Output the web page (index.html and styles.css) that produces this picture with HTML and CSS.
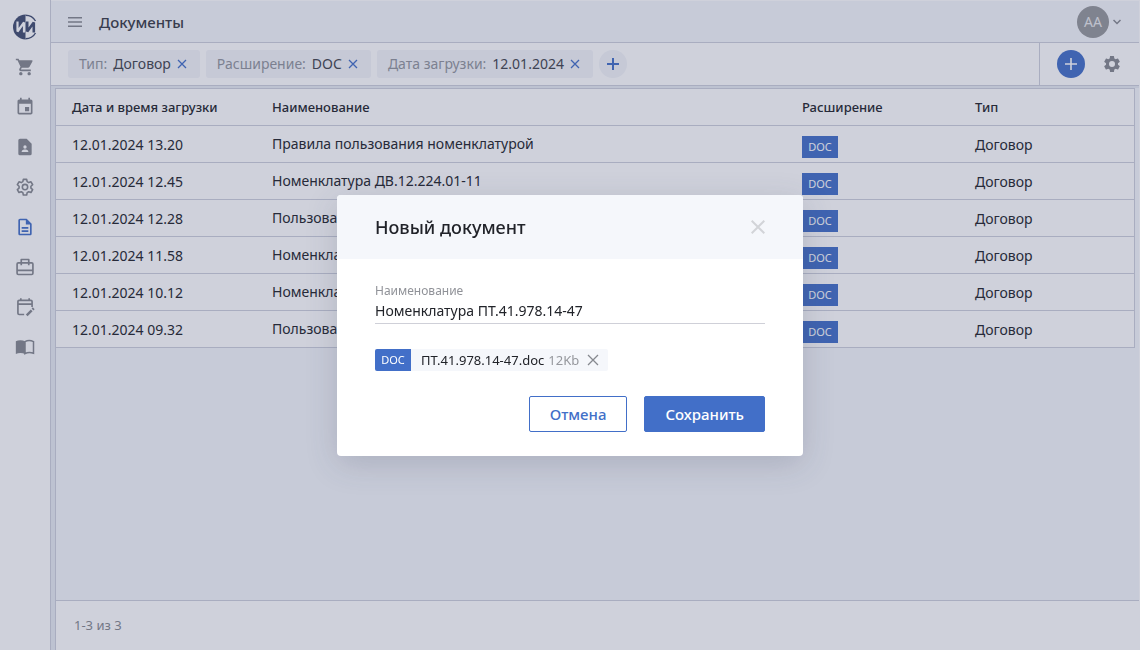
FILE: index.html
```html
<!DOCTYPE html>
<html lang="ru">
<head>
<meta charset="utf-8">
<meta name="viewport" content="width=device-width, initial-scale=1">
<title>Документы</title>
<link rel="stylesheet" href="styles.css">
</head>
<body>
<div class="app">
  <nav class="sidebar" aria-label="Разделы">
    <a class="logo" href="#" aria-label="Главная">
      <svg width="24" height="26" viewBox="0 0 24 26" fill="none" stroke-linejoin="bevel">
        <path d="M12.500 .5A12.500 12.500 0 0 0 12.500 25.500Z" fill="#414d70"/>
        <path d="M12.500 1.200C17 1.200 20.500 3.500 22.500 7M22.500 19C20.500 22.500 17 24.800 12.500 24.800" stroke="#414d70" stroke-width="1.400"/>
        <path d="M4.500 7.500V17.500L11 8.500V18.500" stroke="#fff" stroke-width="2.200"/>
        <path d="M14.200 7.500V17.500L20.800 8.500V18.500" stroke="#414d70" stroke-width="2.600"/>
      </svg>
    </a>
    <a class="nav-link" href="#" aria-label="Закупки"><svg viewBox="0 0 24 24"><path d="M7 18c-1.100 0-1.990.9-1.990 2S5.900 22 7 22s2-.9 2-2-.9-2-2-2zM1 2v2h2l3.600 7.590-1.350 2.450c-.16.28-.25.61-.25.96 0 1.100.9 2 2 2h12v-2H7.420c-.14 0-.25-.11-.25-.25l.03-.12.900-1.630h7.450c.75 0 1.410-.41 1.750-1.030l3.580-6.490A1 1 0 0 0 20 4H5.210l-.94-2H1zm16 16c-1.100 0-1.990.9-1.990 2s.89 2 1.990 2 2-.9 2-2-.9-2-2-2z"/></svg></a>
    <a class="nav-link" href="#" aria-label="Календарь"><svg viewBox="0 0 24 24"><path d="M17 12h-5v5h5v-5zM16 1v2H8V1H6v2H5c-1.110 0-1.990.9-1.990 2L3 19a2 2 0 0 0 2 2h14c1.100 0 2-.9 2-2V5c0-1.100-.9-2-2-2h-1V1h-2zm3 18H5V8h14v11z"/></svg></a>
    <a class="nav-link" href="#" aria-label="Контакты"><svg viewBox="0 0 24 24"><path fill-rule="evenodd" d="M14 2H6a2 2 0 0 0-2 2v16a2 2 0 0 0 2 2h12a2 2 0 0 0 2-2V8zM12 10a2 2 0 1 1 0 4 2 2 0 0 1 0-4zM8 18v-.6c0-1.600 2.600-2.400 4-2.400s4 .8 4 2.400v.6z"/></svg></a>
    <a class="nav-link" href="#" aria-label="Настройки"><svg viewBox="0 0 24 24"><g fill="none" stroke="currentColor" stroke-width="1.900" stroke-linejoin="round"><path d="M10 2.800h4l.6 2.800 1.900 1.100 2.700-.9 2 3.500-2.100 1.800v2.200l2.100 1.800-2 3.500-2.700-.9-1.900 1.100-.6 2.800h-4l-.6-2.800-1.900-1.100-2.700.9-2-3.500 2.100-1.800v-2.200L2.800 9.300l2-3.500 2.700.9 1.900-1.100z"/><circle cx="12" cy="12" r="3.200"/></g></svg></a>
    <a class="nav-link active" href="#" aria-label="Документы" aria-current="page"><svg viewBox="0 0 24 24"><path d="M8 16h8v2H8zm0-4h8v2H8zm6-10H6c-1.100 0-2 .9-2 2v16c0 1.100.89 2 1.990 2H18c1.100 0 2-.9 2-2V8l-6-6zm4 18H6V4h7v5h5v11z"/></svg></a>
    <a class="nav-link" href="#" aria-label="Портфель"><svg viewBox="0 0 24 24"><g fill="none" stroke="currentColor" stroke-width="2" stroke-linejoin="round"><rect x="2.500" y="7" width="19" height="14" rx="1.500"/><path d="M7.500 10V3h9v7M2.500 16h19"/></g></svg></a>
    <a class="nav-link" href="#" aria-label="Планирование"><svg viewBox="0 0 24 24"><g fill="none" stroke="currentColor" stroke-width="2"><path d="M11 21H5a1.500 1.500 0 0 1-1.500-1.500V5.500A1.500 1.500 0 0 1 5 4h14a1.500 1.500 0 0 1 1.500 1.500V12M3.500 8.500h17M7 4V1.500M17 4V1.500"/><path d="M14 22l6-6" stroke-width="3"/><path d="M21 15l1.500-1.500" stroke-width="3"/></g></svg></a>
    <a class="nav-link" href="#" aria-label="Справочник"><svg viewBox="0 0 24 24"><path d="M1 5c3-1.600 8-1.600 11 0v15.500c-3-1.600-8-1.600-11 0z"/><path d="M12 5.500c3-1.600 7-1.600 10.200 0v14c-3.200-1.300-7.200-1.300-10.200.5z" fill="none" stroke="currentColor" stroke-width="1.800"/></svg></a>
  </nav>
  <div class="workspace">
    <header class="topbar">
      <button class="icon-btn" type="button" aria-label="Меню"><svg width="14" height="10" viewBox="0 0 14 10" stroke="currentColor" stroke-width="1.500"><path d="M0 .8h14M0 5h14M0 9.200h14"/></svg></button>
      <h1 class="page-title">Документы</h1>
      <button class="user" type="button" aria-label="Профиль"><span class="avatar">АА</span><svg width="8" height="6" viewBox="0 0 8 6" fill="none" stroke="currentColor" stroke-width="1.500"><path d="M.5 1 4 4.500 7.500 1"/></svg></button>
    </header>
    <div class="toolbar">
      <div class="filters">
        <div class="filter"><span class="filter-name">Тип:</span><span>Договор</span><button class="icon-btn blue" type="button" aria-label="Убрать тип"><svg class="cross" viewBox="0 0 8 8"><path d="M0 0l8 8M8 0L0 8"/></svg></button></div>
        <div class="filter"><span class="filter-name">Расширение:</span><span>DOC</span><button class="icon-btn blue" type="button" aria-label="Убрать расширение"><svg class="cross" viewBox="0 0 8 8"><path d="M0 0l8 8M8 0L0 8"/></svg></button></div>
        <div class="filter"><span class="filter-name">Дата загрузки:</span><span>12.01.2024</span><button class="icon-btn blue" type="button" aria-label="Убрать дату"><svg class="cross" viewBox="0 0 8 8"><path d="M0 0l8 8M8 0L0 8"/></svg></button></div>
        <button class="round" type="button" aria-label="Добавить фильтр"><svg width="12" height="12" viewBox="0 0 12 12" stroke="currentColor" stroke-width="2"><path d="M0 6h12M6 0v12"/></svg></button>
      </div>
      <div class="actions">
        <button class="round primary" type="button" aria-label="Новый документ"><svg width="12" height="12" viewBox="0 0 12 12" stroke="currentColor" stroke-width="1.600"><path d="M0 6h12M6 0v12"/></svg></button>
        <button class="icon-btn" type="button" aria-label="Настройки таблицы"><svg width="20" height="20" viewBox="0 0 24 24" fill="currentColor"><path d="M19.140 12.940c.04-.3.06-.61.06-.94 0-.32-.02-.64-.07-.94l2.030-1.580a.49.49 0 0 0 .12-.61l-1.920-3.320a.488.488 0 0 0-.59-.22l-2.390.96c-.5-.38-1.030-.7-1.620-.94l-.36-2.540a.484.484 0 0 0-.48-.41h-3.840c-.24 0-.43.17-.47.41l-.36 2.540c-.59.24-1.130.57-1.620.94l-2.390-.96c-.22-.08-.47 0-.59.22L2.740 8.870c-.12.21-.08.47.12.61l2.030 1.580c-.05.3-.09.63-.09.94s.02.64.07.94l-2.030 1.580a.49.49 0 0 0-.12.61l1.920 3.320c.12.22.37.29.59.22l2.390-.96c.5.38 1.030.7 1.620.94l.36 2.540c.05.24.24.41.48.41h3.840c.24 0 .44-.17.47-.41l.36-2.540c.59-.24 1.130-.56 1.620-.94l2.390.96c.22.08.47 0 .59-.22l1.920-3.320c.12-.22.07-.47-.12-.61l-2.010-1.580zM12 15.600A3.600 3.600 0 1 1 12 8.400a3.600 3.600 0 0 1 0 7.200z"/></svg></button>
      </div>
    </div>
    <main class="content">
      <div class="table-area">
        <table class="documents">
          <colgroup><col class="col-date"><col><col class="col-ext"><col class="col-type"></colgroup>
          <thead><tr><th>Дата и время загрузки</th><th>Наименование</th><th>Расширение</th><th>Тип</th></tr></thead>
          <tbody>
            <tr><td>12.01.2024 13.20</td><td class="name">Правила пользования номенклатурой</td><td class="ext"><span class="badge">DOC</span></td><td>Договор</td></tr>
            <tr><td>12.01.2024 12.45</td><td class="name">Номенклатура ДВ.12.224.01-11</td><td class="ext"><span class="badge">DOC</span></td><td>Договор</td></tr>
            <tr><td>12.01.2024 12.28</td><td class="name">Пользователь</td><td class="ext"><span class="badge">DOC</span></td><td>Договор</td></tr>
            <tr><td>12.01.2024 11.58</td><td class="name">Номенклатура</td><td class="ext"><span class="badge">DOC</span></td><td>Договор</td></tr>
            <tr><td>12.01.2024 10.12</td><td class="name">Номенклатура</td><td class="ext"><span class="badge">DOC</span></td><td>Договор</td></tr>
            <tr><td>12.01.2024 09.32</td><td class="name">Пользователь</td><td class="ext"><span class="badge">DOC</span></td><td>Договор</td></tr>
          </tbody>
        </table>
      </div>
      <footer class="pager">1-3 из 3</footer>
    </main>
  </div>
</div>
<div class="overlay">
  <form class="modal" role="dialog" aria-modal="true" aria-labelledby="modal-title">
    <header class="modal-head">
      <h2 class="modal-title" id="modal-title">Новый документ</h2>
      <button class="icon-btn close" type="button" aria-label="Закрыть"><svg width="14" height="14" viewBox="0 0 14 14" stroke="currentColor" stroke-width="2"><path d="M.7.7l12.600 12.600M13.300.7L.7 13.300"/></svg></button>
    </header>
    <div class="modal-body">
      <div class="field">
        <label for="doc-name">Наименование</label>
        <input id="doc-name" type="text" value="Номенклатура ПТ.41.978.14-47">
      </div>
      <div class="file">
        <span class="badge">DOC</span>
        <span class="file-name">ПТ.41.978.14-47.doc</span>
        <span class="file-size">12Kb</span>
        <button class="icon-btn remove" type="button" aria-label="Удалить файл"><svg width="12" height="12" viewBox="0 0 12 12" stroke="currentColor" stroke-width="1.300"><path d="M1 1l10 10M11 1L1 11"/></svg></button>
      </div>
      <div class="buttons">
        <button class="btn" type="button">Отмена</button>
        <button class="btn btn-primary" type="submit">Сохранить</button>
      </div>
    </div>
  </form>
</div>
</body>
</html>
```
FILE: styles.css
```css
:root {
  --blue: #426fc8;
  --line: #cdd0dc;
  --soft: #f5f7fb;
  --gray: #86898f;
  --text: #212329;
}

* { box-sizing: border-box; }

body {
  margin: 0;
  color: var(--text);
  font: 14px/20px "Noto Sans", "Open Sans", sans-serif;
}

button, input { font: inherit; color: inherit; }
button { cursor: pointer; }
svg { display: block; }

.app { display: flex; min-height: 100vh; }

.sidebar {
  display: flex;
  flex: none;
  flex-direction: column;
  align-items: center;
  gap: 20px;
  width: 51px;
  padding-top: 14px;
  border-right: 1px solid var(--line);
}
.logo { margin-bottom: -3px; }
.nav-link { color: var(--gray); }
.nav-link svg { width: 20px; height: 20px; fill: currentColor; }
.nav-link.active { color: var(--blue); }

.workspace {
  display: flex;
  flex: 1;
  flex-direction: column;
  min-width: 0;
  border-right: 1px solid #fff;
  background: #e8ebf2;
}

.topbar {
  display: flex;
  align-items: center;
  height: 43px;
  padding: 0 18px 0 17px;
  border-top: 1px solid #fff;
  border-bottom: 1px solid var(--line);
  background: var(--soft);
}
.page-title { margin: 0 auto 0 17px; font-size: 15px; font-weight: 500; color: #383b45; }
.user { display: flex; align-items: center; gap: 4px; padding: 0; border: 0; background: none; color: var(--gray); }
.avatar { width: 32px; border-radius: 50%; background: #96989b; color: #e9eaeb; line-height: 32px; text-align: center; }

.icon-btn { display: flex; padding: 0; border: 0; background: none; color: var(--gray); }
.blue { color: var(--blue); }
.cross { width: 8px; height: 8px; overflow: visible; stroke: currentColor; stroke-width: 1.3; }

.toolbar { display: flex; height: 43px; border-bottom: 1px solid var(--line); background: #fff; }
.filters { display: flex; flex: 1; align-items: center; gap: 6px; padding-left: 17px; }
.filter {
  display: flex;
  align-items: center;
  gap: 6px;
  height: 28px;
  padding: 0 14px 0 11px;
  border-radius: 3px;
  background: #f3f5f9;
  color: #41444c;
}
.filter-name { color: #92959d; }
.filter .icon-btn { margin-left: 1px; }
.round {
  display: grid;
  place-items: center;
  width: 28px;
  height: 28px;
  padding: 0;
  border: 0;
  border-radius: 50%;
  background: #f3f5f9;
  color: var(--blue);
}
.round.primary { background: var(--blue); color: #fff; }
.actions { display: flex; align-items: center; gap: 17px; padding: 0 17px; border-left: 1px solid var(--line); }

.content { display: flex; flex: 1; flex-direction: column; padding: 2px 0 0 4px; }
.table-area { flex: 1; border-left: 1px solid var(--line); background: var(--soft); }
.documents {
  width: calc(100% - 4px);
  border-collapse: separate;
  border-spacing: 0;
  table-layout: fixed;
  border: solid var(--line);
  border-width: 1px 1px 0 0;
  background: #fff;
}
.col-date { width: 200px; }
.col-ext { width: 173px; }
.col-type { width: 175px; }
.documents th, .documents td { height: 37px; padding: 2px 0 0 16px; border-bottom: 1px solid var(--line); text-align: left; }
.documents th { padding-top: 0; padding-bottom: 1px; font-size: 13px; font-weight: 500; }
.documents .name { padding-top: 0; }
.documents .ext { padding-top: 6px; }
.badge {
  display: block;
  flex: none;
  width: 36px;
  background: var(--blue);
  color: #fff;
  font-size: 11px;
  line-height: 22px;
  text-align: center;
}
.pager {
  padding: 14px 18px 15px;
  border: solid var(--line);
  border-width: 1px 0 0 1px;
  background: #fff;
  color: var(--gray);
  font-size: 13px;
}

.overlay {
  position: fixed;
  inset: 0;
  display: flex;
  align-items: center;
  justify-content: center;
  background: rgb(57 65 105 / .243);
}
.modal {
  width: 466px;
  max-width: 100%;
  border-radius: 4px;
  overflow: hidden;
  background: #fff;
  box-shadow: 0 8px 32px rgb(57 64 90 / .2);
}
.modal-head { display: flex; align-items: center; justify-content: space-between; height: 64px; padding: 0 38px; background: var(--soft); }
.modal-title { margin: 0; font-size: 18px; font-weight: 500; }
.close { color: #d2d4d8; }
.modal-body { padding: 24px 38px; }
.field label { display: block; color: #909298; font-size: 12px; line-height: 16px; }
.field input {
  display: block;
  width: 100%;
  height: 25px;
  padding: 0;
  border: 0;
  border-bottom: 1px solid #cfd0d8;
  border-radius: 0;
  outline: 0;
  background: none;
}
.file { display: flex; align-items: center; width: max-content; margin: 25px 0; padding-right: 9px; border-radius: 2px; overflow: hidden; background: var(--soft); font-size: 13px; }
.file-name { margin-left: 10px; }
.file-size { margin: 0 8px 0 4px; color: #96989d; }
.buttons { display: flex; justify-content: flex-end; gap: 17px; }
.btn {
  height: 36px;
  padding: 0 20px;
  border: 1px solid var(--blue);
  border-radius: 2px;
  background: #fff;
  color: var(--blue);
  font-size: 15px;
  font-weight: 500;
}
.btn-primary { background: var(--blue); color: #fff; }
```
